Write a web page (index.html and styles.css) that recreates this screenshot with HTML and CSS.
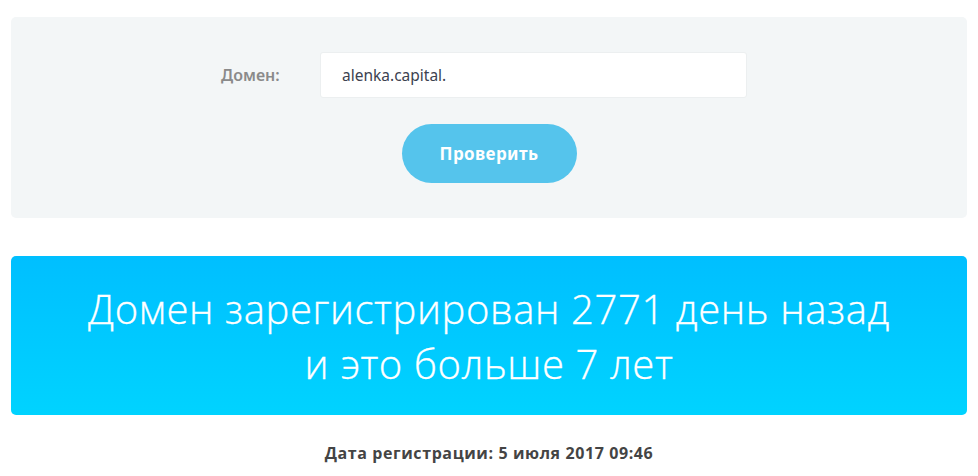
FILE: index.html
```html
<!DOCTYPE html>
<html lang="ru">
<head>
<meta charset="utf-8">
<link rel="stylesheet" href="styles.css">
</head>
<body>
<div class="page">
  <form class="check-panel">
    <div class="field-row">
      <label class="field-label" for="domain">Домен:</label>
      <div class="field-input" id="domain">alenka.capital.</div>
    </div>
    <button type="button" class="check-btn">Проверить</button>
  </form>
  <div class="result-banner">
    <p class="result-text">Домен зарегистрирован 2771 день назад<br>и это больше 7 лет</p>
  </div>
  <p class="reg-date">Дата регистрации: 5 июля 2017 09:46</p>
</div>
</body>
</html>
```
FILE: styles.css
```css
html, body {
  margin: 0;
  padding: 0;
  background: #ffffff;
}
body {
  font-family: "Open Sans", "Noto Sans", sans-serif;
}
.page {
  padding: 17px 11px 0 11px;
  display: flex;
  flex-direction: column;
}
.check-panel {
  background: #f3f6f7;
  border-radius: 5px;
  height: 201px;
  box-sizing: border-box;
  padding-top: 35px;
  display: flex;
  flex-direction: column;
  align-items: center;
  margin: 0;
}
.field-row {
  display: flex;
  align-items: center;
  margin-right: 10px;
}
.field-label {
  width: 99px;
  font-size: 16px;
  font-weight: 600;
  color: #8a8a8a;
  font-family: "Noto Sans", sans-serif;
}
.field-input {
  width: 427px;
  height: 46px;
  box-sizing: border-box;
  background: #ffffff;
  border: 1px solid #eceff0;
  border-radius: 3px;
  padding: 0 0 0 21px;
  display: flex;
  align-items: center;
  font-size: 15.5px;
  color: #3c4250;
  font-family: "Noto Sans", sans-serif;
}
.check-btn {
  margin-top: 26px;
  width: 175px;
  height: 59px;
  border: none;
  border-radius: 30px;
  background: #55c4ec;
  color: #ffffff;
  font-family: "Noto Sans", sans-serif;
  font-weight: 700;
  font-size: 17px;
  letter-spacing: 0.4px;
  padding: 0;
}
.result-banner {
  margin-top: 38px;
  height: 159px;
  border-radius: 5px;
  background: linear-gradient(180deg, #00bfff 0%, #00d3ff 100%);
  display: flex;
  align-items: center;
  justify-content: center;
}
.result-text {
  margin: 0;
  color: #ffffff;
  font-weight: 300;
  font-size: 40px;
  line-height: 55px;
  text-align: center;
  letter-spacing: 0.6px;
  -webkit-text-stroke: 0.3px #ffffff;
}
.reg-date {
  margin: 27px 0 0 0;
  text-align: center;
  font-size: 16px;
  font-weight: 700;
  letter-spacing: 0.6px;
  color: #444444;
}
```
